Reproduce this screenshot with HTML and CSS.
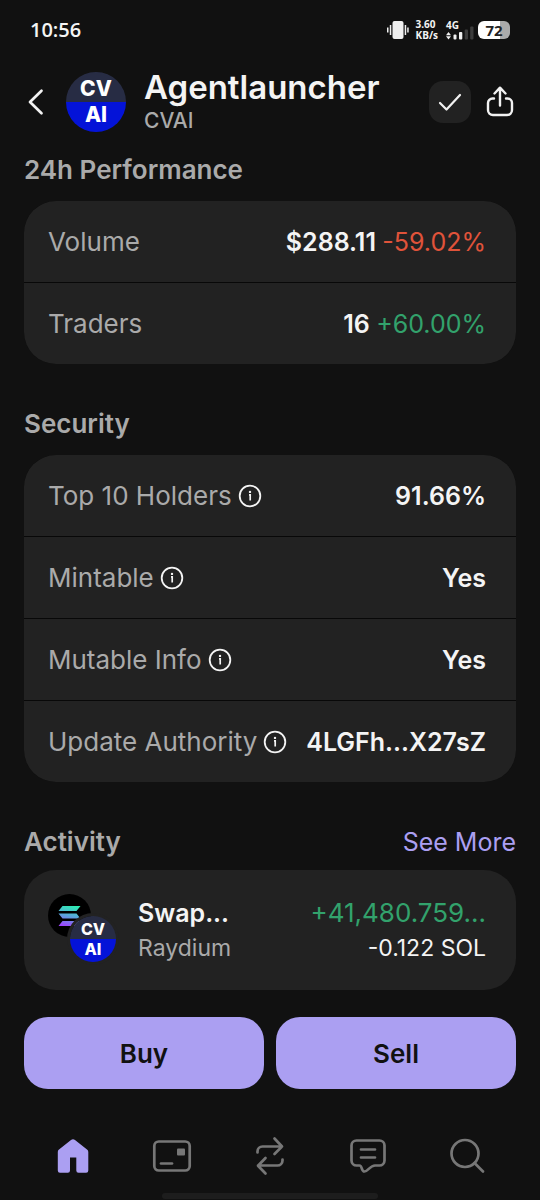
FILE: index.html
```html
<!DOCTYPE html>
<html lang="en">
<head>
<meta charset="utf-8">
<meta name="viewport" content="width=device-width, initial-scale=1">
<title>Agentlauncher</title>
<link rel="stylesheet" href="styles.css">
</head>
<body>
<svg class="defs" aria-hidden="true">
  <symbol id="info" viewBox="0 0 24 24">
    <circle cx="12" cy="12" r="10.3" fill="none" stroke="currentColor" stroke-width="1.8"/>
    <circle cx="12" cy="7.9" r="1.2" fill="currentColor"/>
    <path d="M11 10.8H12.2V16.6" fill="none" stroke="currentColor" stroke-width="1.7"/>
  </symbol>
</svg>

<div class="status">
  <time class="clock">10:56</time>
  <div class="status-icons">
    <svg width="22" height="20" viewBox="0 0 22 20" fill="#f0f0f0"><rect x="5.5" y="1" width="11" height="18" rx="2"/><rect x="0" y="7.5" width="1.5" height="5"/><rect x="2.8" y="5" width="1.5" height="10"/><rect x="17.7" y="5" width="1.5" height="10"/><rect x="20.2" y="7.5" width="1.5" height="5"/></svg>
    <div class="speed"><span>3.60</span><span>KB/s</span></div>
    <div class="signal">
      <span>4G</span>
      <svg width="28" height="20" viewBox="0 0 28 20"><path d="M0 15.2 2.5 12 5 15.2zM0 16.2 2.5 19.4 5 16.2z" fill="#f0f0f0"/><rect x="7.5" y="14.5" width="3" height="5" rx="1" fill="#f0f0f0"/><rect x="13" y="12" width="3.3" height="7.5" rx="1" fill="#f0f0f0"/><rect x="18.7" y="9.5" width="3.3" height="10" rx="1" fill="#3c3c3c"/><rect x="24.2" y="6.5" width="3.3" height="13" rx="1" fill="#3c3c3c"/></svg>
    </div>
    <div class="battery">72</div>
  </div>
</div>

<header class="header">
  <button class="icon-button back" aria-label="Back"><svg width="18" height="30" viewBox="0 0 18 30" fill="none" stroke="#f2f2f2" stroke-width="2.7" stroke-linecap="round" stroke-linejoin="round"><path d="M14.5 3.8 3 15 14.5 26.2"/></svg></button>
  <div class="token avatar"><span>CV</span><span>AI</span></div>
  <div class="titles">
    <h1 class="name">Agentlauncher</h1>
    <p class="ticker">CVAI</p>
  </div>
  <button class="icon-button check" aria-label="In watchlist"><svg width="24" height="20" viewBox="0 0 24 20" fill="none" stroke="#f2f2f2" stroke-width="2.2" stroke-linecap="round" stroke-linejoin="round"><path d="M2 11 8.5 17.5 22 3"/></svg></button>
  <button class="icon-button share" aria-label="Share"><svg width="28" height="34" viewBox="0 0 28 34" fill="none" stroke="#f2f2f2" stroke-width="2.4" stroke-linecap="round" stroke-linejoin="round"><path d="M8 13.5H6.5A4.5 4.5 0 0 0 2 18v7a5 5 0 0 0 5 5H21a5 5 0 0 0 5-5V18a4.5 4.5 0 0 0-4.5-4.5H20M14 20.5V3M8.5 8.5 14 2.7l5.5 5.8"/></svg></button>
</header>

<main class="main">
  <section>
    <h2 class="heading">24h Performance</h2>
    <dl class="card">
      <div class="row"><dt>Volume</dt><dd>$288.11 <span class="down">-59.02%</span></dd></div>
      <div class="row"><dt>Traders</dt><dd>16 <span class="up">+60.00%</span></dd></div>
    </dl>
  </section>
  <section>
    <h2 class="heading">Security</h2>
    <dl class="card">
      <div class="row"><dt>Top 10 Holders <svg class="info"><use href="#info"/></svg></dt><dd>91.66%</dd></div>
      <div class="row"><dt>Mintable <svg class="info"><use href="#info"/></svg></dt><dd>Yes</dd></div>
      <div class="row"><dt>Mutable Info <svg class="info"><use href="#info"/></svg></dt><dd>Yes</dd></div>
      <div class="row"><dt>Update Authority <svg class="info"><use href="#info"/></svg></dt><dd>4LGFh...X27sZ</dd></div>
    </dl>
  </section>
  <section>
    <div class="heading-row">
      <h2 class="heading">Activity</h2>
      <a class="more" href="#">See More</a>
    </div>
    <div class="swap">
      <div class="pair">
        <svg width="43" height="43" viewBox="0 0 43 43" role="img" aria-label="SOL">
          <defs><linearGradient id="sol" gradientUnits="userSpaceOnUse" x1="24" y1="11" x2="19" y2="33"><stop offset="0" stop-color="#2bf0b0"/><stop offset=".5" stop-color="#5aa5dc"/><stop offset="1" stop-color="#a040ff"/></linearGradient></defs>
          <circle cx="21.5" cy="21.5" r="21.5" fill="#000"/>
          <path d="M14.5 12H32.5L28.5 17H10.5zM10.5 19.5H28.5L32.5 24.5H14.5zM14.5 27H32.5L28.5 32H10.5z" fill="url(#sol)"/>
        </svg>
        <div class="token token-small"><span>CV</span><span>AI</span></div>
      </div>
      <div class="swap-info"><span class="swap-title">Swap...</span><span class="swap-source">Raydium</span></div>
      <div class="swap-amounts"><span class="received">+41,480.759...</span><span class="spent">-0.122 SOL</span></div>
    </div>
  </section>
</main>

<div class="actions">
  <button class="action">Buy</button>
  <button class="action">Sell</button>
</div>

<nav class="nav">
  <a class="tab active" href="#" aria-label="Home"><svg width="40" height="40" viewBox="0 0 40 40" fill="currentColor"><path d="M18 4a3.2 3.2 0 0 1 4 0L34 13.5a3 3 0 0 1 1.3 2.5V34.5a2.2 2.2 0 0 1-2.2 2.2H25.5a2.2 2.2 0 0 1-2.2-2.2V21.5H17V34.5a2.2 2.2 0 0 1-2.2 2.2H7a2.2 2.2 0 0 1-2.2-2.2V16A3 3 0 0 1 6 13.5z"/></svg></a>
  <a class="tab" href="#" aria-label="Wallet"><svg width="40" height="40" viewBox="0 0 40 40" fill="none" stroke="currentColor" stroke-width="2.7" stroke-linecap="round"><rect x="2.3" y="5.5" width="35.4" height="29" rx="4.5"/><path d="M9 27.5H20"/><rect x="25" y="12.5" width="8" height="7" rx="1" fill="currentColor" stroke="none"/></svg></a>
  <a class="tab" href="#" aria-label="Swap"><svg width="40" height="40" viewBox="0 0 40 40" fill="none" stroke="currentColor" stroke-width="2.7" stroke-linecap="round" stroke-linejoin="round"><path d="M7.5 16.5V15.5a5 5 0 0 1 5-5H32M24.5 2.5 32 10.5 24.5 18M32.5 23.5V24.5a5 5 0 0 1-5 5H8M15.5 22 8 29.8l7.5 7.7"/></svg></a>
  <a class="tab" href="#" aria-label="Messages"><svg width="40" height="40" viewBox="0 0 40 40" fill="none" stroke="currentColor" stroke-width="2.7" stroke-linecap="round" stroke-linejoin="round"><path d="M8.5 4.5H31.5a5 5 0 0 1 5 5V24.5a5 5 0 0 1-5 5H27C22 29.5 20 35.5 16.5 35.5C13 35.5 14.5 29.5 11.5 29.5H8.5a5 5 0 0 1-5-5V9.5a5 5 0 0 1 5-5zM13 13.5H27M13 21.5H27"/></svg></a>
  <a class="tab" href="#" aria-label="Search"><svg width="40" height="40" viewBox="0 0 40 40" fill="none" stroke="currentColor" stroke-width="2.7" stroke-linecap="round"><circle cx="18" cy="17.5" r="13.5"/><path d="M27.5 27 36 35.5"/></svg></a>
</nav>
<div class="home-bar"></div>
</body>
</html>
```
FILE: styles.css
```css
* { box-sizing: border-box; }

body {
  margin: 0;
  min-height: 100vh;
  display: flex;
  flex-direction: column;
  background: #111;
  color: #f4f4f4;
  font-family: Inter, sans-serif;
  font-size: 26px;
  line-height: 33px;
}

h1, h2, p, dl, dd { margin: 0; }
a { color: inherit; text-decoration: none; }
button { font: inherit; border: 0; padding: 0; cursor: pointer; }
svg { display: block; flex: none; }

.defs { position: absolute; width: 0; height: 0; }

.token {
  display: grid;
  align-content: center;
  width: 60px;
  height: 60px;
  border-radius: 50%;
  background: linear-gradient(#272c44 50%, #0413d8 50%);
  color: #fff;
  font-size: 21px;
  line-height: 26px;
  font-weight: 800;
  text-align: center;
}

.status {
  display: flex;
  align-items: center;
  justify-content: space-between;
  height: 60px;
  padding: 0 30px;
}
.clock { font: 600 20px/24px "Open Sans", sans-serif; }
.status-icons { display: flex; align-items: center; }
.speed, .signal { font: 700 10px/11px "Open Sans", sans-serif; }
.speed { display: flex; flex-direction: column; margin: 0 8px 0 7px; }
.signal { display: grid; }
.signal > * { grid-area: 1 / 1; }
.battery {
  width: 32px;
  height: 18px;
  margin-left: 4px;
  border-radius: 6px;
  background: linear-gradient(90deg, #fff 70%, #aaa 70%);
  color: #222;
  font: 700 15px/18px "Open Sans", sans-serif;
  text-align: center;
}

.header {
  display: flex;
  align-items: center;
  padding: 8px 26px 8px 24px;
}
.icon-button {
  display: flex;
  align-items: center;
  justify-content: center;
  background: none;
}
.back { width: 24px; height: 42px; }
.avatar { margin-left: 18px; }
.titles { flex: 1; min-width: 0; margin-left: 18px; }
.name { font-size: 33px; line-height: 38px; font-weight: 600; }
.ticker { font-size: 21px; line-height: 30px; font-weight: 500; color: #aaa; }
.check { width: 42px; height: 42px; border-radius: 14px; background: #222; }
.share { width: 28px; height: 42px; margin-left: 15px; }

.main {
  flex: 1;
  display: flex;
  flex-direction: column;
  gap: 45px;
  padding: 11px 24px 0;
}
.heading { font-size: 26px; line-height: 30px; font-weight: 600; color: #aaa; }
.card {
  display: flex;
  flex-direction: column;
  gap: 1px;
  margin-top: 16px;
  border-radius: 32px;
  overflow: hidden;
  background: #080808;
}
.row {
  display: flex;
  align-items: baseline;
  justify-content: space-between;
  padding: 24px 30px 24px 24px;
  background: #222;
}
.row dt { display: flex; align-items: center; gap: 6px; color: #aaa; }
.row dd { font-size: 25px; line-height: 32px; font-weight: 600; white-space: nowrap; }
.row dd span { font-weight: 400; }
.down { color: #e0533a; }
.up { color: #32a26c; }
.info { width: 24px; height: 24px; color: #f4f4f4; }

.heading-row { display: flex; align-items: center; justify-content: space-between; }
.more { font-size: 25px; line-height: 30px; color: #ab9ff2; }
.swap {
  display: flex;
  align-items: center;
  margin-top: 13px;
  padding: 24px 30px 24px 24px;
  border-radius: 32px;
  background: #222;
  min-height: 120px;
}
.pair { position: relative; align-self: flex-start; width: 68px; height: 68px; }
.token-small {
  position: absolute;
  right: 0;
  bottom: 0;
  width: 46px;
  height: 46px;
  box-shadow: 0 0 0 3px #222;
  font-size: 16px;
  line-height: 20px;
}
.swap-info, .swap-amounts { display: flex; flex-direction: column; }
.swap-info { flex: 1; margin-left: 22px; }
.swap-amounts { text-align: right; }
.swap-title, .received { line-height: 36px; }
.swap-title { font-size: 25px; font-weight: 600; }
.received { color: #32a26c; }
.swap-source, .spent { font-size: 23px; line-height: 34px; }
.swap-source { color: #aaa; }

.actions {
  display: grid;
  grid-template-columns: 1fr 1fr;
  gap: 12px;
  padding: 27px 24px 0;
}
.action {
  height: 72px;
  border-radius: 24px;
  background: #ab9ff2;
  color: #111;
  font-weight: 600;
}

.nav {
  display: flex;
  justify-content: space-around;
  padding: 47px 24px 17px;
}
.tab { color: #777; }
.active { color: #ab9ff2; }
.home-bar {
  width: 40%;
  height: 6px;
  margin: 0 auto 1px;
  border-radius: 3px;
  background: #1d1d1d;
}
```
